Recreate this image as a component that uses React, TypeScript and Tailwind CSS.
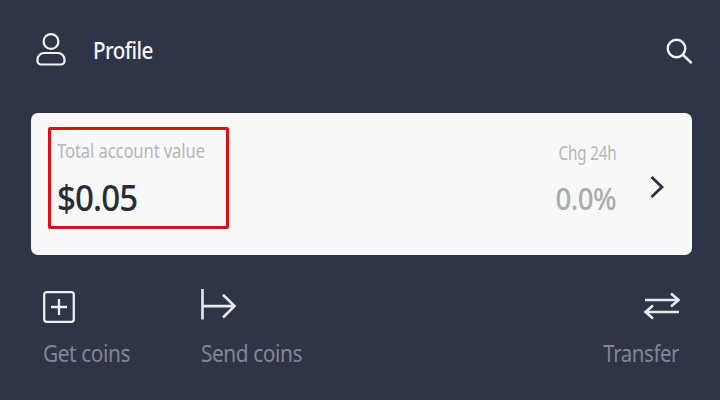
export default function App() {
  const font = "[font-family:'Noto_Sans','Liberation_Sans',sans-serif]";
  return (
    <div className={`w-[720px] h-[400px] overflow-hidden bg-[#2f3547] flex flex-col ${font}`}>
      <header className="h-[113px] flex items-start pl-[36px] pr-[27px] pt-[31px]">
        <svg width="30" height="36" viewBox="0 0 30 36" fill="none" stroke="#f1f2f4" strokeWidth="2.2" className="mr-[27px] mt-[1px] shrink-0">
          <circle cx="15" cy="9.5" r="7.4" />
          <path d="M8 21 H22 A6.5 6.5 0 0 1 28.5 27.5 V29 A3.5 3.5 0 0 1 25 32.5 H5 A3.5 3.5 0 0 1 1.5 29 V27.5 A6.5 6.5 0 0 1 8 21 Z" />
        </svg>
        <span className="inline-block origin-left scale-x-[0.86] text-[24px] leading-[38px] font-medium text-[#f3f4f6] tracking-[-0.7px]">Profile</span>
        <svg width="28" height="28" viewBox="0 0 28 28" fill="none" stroke="#f1f2f4" strokeWidth="2.4" strokeLinecap="round" className="ml-auto mt-[6px]">
          <circle cx="11.5" cy="11.5" r="8.8" />
          <path d="M18 18 L26 25.5" />
        </svg>
      </header>

      <section className="ml-[31px] w-[661px] h-[142px] rounded-[7px] bg-[#f8f8f8] flex items-start pl-[17px] pt-[14px] pr-[28px]">
        <div className="w-[181px] h-[102px] border-[3px] border-[#dc0f17] rounded-[2px] pl-[6px] pt-[8px] flex flex-col">
          <span className="inline-block origin-left scale-x-[0.85] whitespace-nowrap text-[19.5px] leading-[26px] text-[#b4b6b8] tracking-[-0.1px]">Total account value</span>
          <span className="inline-block origin-left scale-x-[0.92] mt-[12px] text-[36px] leading-[44px] font-medium text-[#272c38] tracking-[-1px]">$0.05</span>
        </div>
        <div className="ml-auto flex flex-col items-end mt-[13px] mr-[34px]">
          <span className="inline-block origin-right scale-x-[0.8] whitespace-nowrap text-[19px] leading-[26px] text-[#b4b6b8] tracking-[-0.2px]">Chg 24h</span>
          <span className="inline-block origin-right scale-x-[0.89] mt-[12px] text-[31px] leading-[40px] font-medium text-[#a9acb0] tracking-[-0.6px]">0.0%</span>
        </div>
        <svg width="14" height="24" viewBox="0 0 14 24" fill="none" stroke="#2b3040" strokeWidth="2.8" className="mt-[48px]">
          <path d="M1.5 2 L12 12 L1.5 22" />
        </svg>
      </section>

      <nav className="flex items-start pt-[34px] pl-[43px] pr-[40px]">
        <div className="flex flex-col w-[158px]">
          <svg width="34" height="34" viewBox="0 0 34 34" fill="none" stroke="#eceef0" strokeWidth="2.3" className="mt-[2px] mb-[-2px]">
            <rect x="1.2" y="1.2" width="29.6" height="29.6" rx="2.5" />
            <path d="M16 8 V24 M8 16 H24" />
          </svg>
          <span className="inline-block origin-left scale-x-[0.87] whitespace-nowrap mt-[14px] text-[24px] leading-[32px] text-[#7f8695] tracking-[-0.5px]">Get coins</span>
        </div>
        <div className="flex flex-col">
          <svg width="36" height="34" viewBox="0 0 36 34" fill="none" stroke="#e6e8ec" strokeWidth="2.6">
            <path d="M1.5 0 V33 M2 20 H33 M22 9 L33.5 20 L22 31" transform="translate(0 -3.5) scale(1 1.03)" />
          </svg>
          <span className="inline-block origin-left scale-x-[0.87] whitespace-nowrap mt-[14px] text-[24px] leading-[32px] text-[#7f8695] tracking-[-0.5px]">Send coins</span>
        </div>
        <div className="ml-auto flex flex-col items-end">
          <svg width="38" height="34" viewBox="0 0 38 34" fill="none" stroke="#e6e8ec" strokeWidth="2.6">
            <path d="M3 11 H36 M29 4.5 L36.5 11 L29 17.5 M37 23 H4 M11 16.5 L3.5 23 L11 29.5" />
          </svg>
          <span className="inline-block origin-right scale-x-[0.85] whitespace-nowrap mt-[14px] mr-[1px] text-[24px] leading-[32px] text-[#7f8695] tracking-[-0.5px]">Transfer</span>
        </div>
      </nav>
    </div>
  );
}
